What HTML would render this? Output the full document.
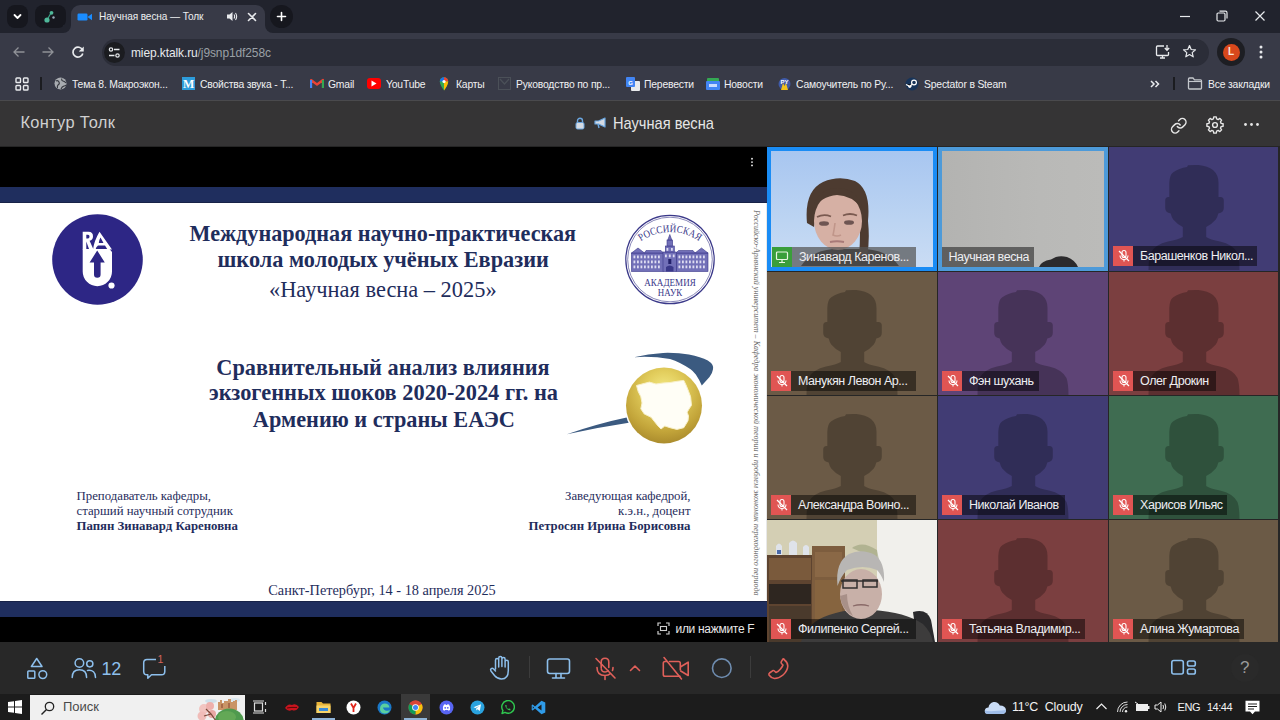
<!DOCTYPE html>
<html><head><meta charset="utf-8">
<style>
*{margin:0;padding:0;box-sizing:border-box}
html,body{width:1280px;height:720px;overflow:hidden;background:#000;font-family:"Liberation Sans",sans-serif}
.a{position:absolute}
#tabs{left:0;top:0;width:1280px;height:33px;background:#21232d}
#tool{left:0;top:33px;width:1280px;height:37px;background:#383a47}
#bm{left:0;top:70px;width:1280px;height:30px;background:#383a47}
#hdr{left:0;top:100px;width:1280px;height:46px;background:#353435;border-top:1px solid #4a4a4d}
#main{left:0;top:147px;width:767px;height:495px;background:#000}
#grid{left:767px;top:147px;width:513px;height:495px;background:#262626}
#ctl{left:0;top:642px;width:1280px;height:52px;background:#282828}
#task{left:0;top:694px;width:1280px;height:26px;background:#1c1c1c}
.t{white-space:nowrap}
.tile{overflow:hidden}
.lbl{height:20px;background:rgba(0,0,0,0.48);color:#eeeef2;font-size:12.5px;line-height:20px;padding-left:7px;white-space:nowrap;overflow:hidden;letter-spacing:-0.45px}
.sb{font-family:"Liberation Serif",serif;font-weight:bold;color:#1f2d5c;line-height:1}
.sr{font-family:"Liberation Serif",serif;color:#1f2d5c;line-height:1}
.sr2{font-family:"Liberation Serif",serif;color:#1f2d5c;font-size:12.8px;line-height:1}
.bmt{top:8px;font-size:11.5px;color:#f0f0f2;letter-spacing:-0.2px;transform:scaleX(0.9);transform-origin:0 0}
</style></head><body>

<div id="tabs" class="a">
  <div class="a" style="left:7px;top:5px;width:21px;height:23px;border-radius:8px;background:#16171e"></div>
  <svg class="a" style="left:11px;top:10px" width="13" height="13" viewBox="0 0 13 13"><path d="M3.5 5 L6.5 8 L9.5 5" stroke="#fff" stroke-width="1.8" fill="none" stroke-linecap="round" stroke-linejoin="round"/></svg>
  <div class="a" style="left:35px;top:5px;width:31px;height:23px;border-radius:8px;background:#16171e"></div>
  <svg class="a" style="left:42px;top:9px" width="16" height="16" viewBox="0 0 16 16"><line x1="5" y1="11" x2="9" y2="4" stroke="#3aa889" stroke-width="1.2"/><circle cx="5" cy="11" r="2.6" fill="#4fb89a"/><circle cx="9.5" cy="3.8" r="1.9" fill="#4fb89a"/><circle cx="11.5" cy="8.5" r="1.2" fill="#9ab"/></svg>
  <!-- active tab -->
  <div class="a" style="left:71px;top:5px;width:194px;height:28px;background:#383a47;border-radius:9px 9px 0 0"></div>
  <div class="a" style="left:63px;top:25px;width:8px;height:8px;background:#383a47"></div>
  <div class="a" style="left:63px;top:25px;width:8px;height:8px;background:#21232d;border-radius:0 0 8px 0"></div>
  <div class="a" style="left:265px;top:25px;width:8px;height:8px;background:#383a47"></div>
  <div class="a" style="left:265px;top:25px;width:8px;height:8px;background:#21232d;border-radius:0 0 0 8px"></div>
  <svg class="a" style="left:77px;top:12px" width="16" height="10" viewBox="0 0 16 10"><rect x="0.5" y="1.5" width="10" height="7" rx="1.2" fill="#1a8cff"/><path d="M10.5 5 L15 1.8 L15 8.2 Z" fill="#1a8cff"/></svg>
  <div class="a t" style="left:98.5px;top:10px;font-size:11.2px;color:#eceef0;letter-spacing:-0.1px;transform:scaleX(0.9);transform-origin:0 0">Научная весна — Толк</div>
  <svg class="a" style="left:226px;top:11px" width="12" height="11" viewBox="0 0 12 11"><path d="M1 3.5 H3.5 L6.5 1 V10 L3.5 7.5 H1 Z" fill="#e8eaed"/><path d="M8 3.5 Q9.3 5.5 8 7.5 M9.5 2 Q11.8 5.5 9.5 9" stroke="#e8eaed" stroke-width="1.1" fill="none"/></svg>
  <svg class="a" style="left:247px;top:12px" width="10" height="10" viewBox="0 0 10 10"><path d="M1.5 1.5 L8.5 8.5 M8.5 1.5 L1.5 8.5" stroke="#e8eaed" stroke-width="1.6" stroke-linecap="round"/></svg>
  <div class="a" style="left:270px;top:5px;width:23px;height:23px;border-radius:50%;background:#16171e"></div>
  <svg class="a" style="left:275px;top:10px" width="13" height="13" viewBox="0 0 13 13"><path d="M6.5 2.5 V10.5 M2.5 6.5 H10.5" stroke="#fff" stroke-width="1.6" stroke-linecap="round"/></svg>
  <svg class="a" style="left:1178px;top:9px" width="14" height="14" viewBox="0 0 14 14"><path d="M2 7.5 H12" stroke="#e8eaed" stroke-width="1.2"/></svg>
  <svg class="a" style="left:1215px;top:9px" width="14" height="14" viewBox="0 0 14 14"><rect x="2" y="4" width="8" height="8" rx="1.2" stroke="#e8eaed" stroke-width="1.2" fill="none"/><path d="M4.5 2.2 H10.5 Q12 2.2 12 3.7 V9.5" stroke="#e8eaed" stroke-width="1.2" fill="none"/></svg>
  <svg class="a" style="left:1253px;top:9px" width="14" height="14" viewBox="0 0 14 14"><path d="M2.5 2.5 L11.5 11.5 M11.5 2.5 L2.5 11.5" stroke="#e8eaed" stroke-width="1.2"/></svg>
</div>
<div id="tool" class="a">
  <svg class="a" style="left:12px;top:12px" width="14" height="14" viewBox="0 0 14 14"><path d="M12.5 7 H2 M6.5 2.5 L2 7 L6.5 11.5" stroke="#8f9197" stroke-width="1.3" fill="none"/></svg>
  <svg class="a" style="left:41px;top:12px" width="14" height="14" viewBox="0 0 14 14"><path d="M1.5 7 H12 M7.5 2.5 L12 7 L7.5 11.5" stroke="#8f9197" stroke-width="1.3" fill="none"/></svg>
  <svg class="a" style="left:71px;top:12px" width="14" height="14" viewBox="0 0 14 14"><path d="M11.6 5.2 A5 5 0 1 0 11.8 8.5" stroke="#e8eaed" stroke-width="1.7" fill="none"/><path d="M12.5 1.8 V6.3 H8" fill="#e8eaed" stroke="#e8eaed" stroke-width="0.5"/></svg>
  <div class="a" style="left:102px;top:6px;width:1107px;height:27px;border-radius:14px;background:#2b2d38"></div>
  <div class="a" style="left:104px;top:9px;width:21px;height:21px;border-radius:50%;background:#1b1c20"></div>
  <svg class="a" style="left:107px;top:12px" width="15" height="15" viewBox="0 0 15 15"><circle cx="4" cy="4.5" r="1.7" stroke="#e8eaed" stroke-width="1.2" fill="none"/><path d="M7 4.5 H12.5 M2 10.5 H7.5" stroke="#e8eaed" stroke-width="1.3"/><circle cx="10.5" cy="10.5" r="1.7" stroke="#e8eaed" stroke-width="1.2" fill="none"/></svg>
  <div class="a t" style="left:131px;top:12px;font-size:13px;color:#e8eaed;letter-spacing:-0.1px;transform:scaleX(0.92);transform-origin:0 0">miep.ktalk.ru<span style="color:#9aa0a6">/j9snp1df258c</span></div>
  <svg class="a" style="left:1155px;top:11px" width="16" height="16" viewBox="0 0 16 16"><path d="M9 2 H2.5 Q1.5 2 1.5 3 V10.5 Q1.5 11.5 2.5 11.5 H12.5 Q13.5 11.5 13.5 10.5 V8" stroke="#e8eaed" stroke-width="1.3" fill="none"/><path d="M5 14 H10 M7.5 11.5 V14" stroke="#e8eaed" stroke-width="1.3"/><path d="M12 1 V6 M9.8 4 L12 6.3 L14.2 4" stroke="#e8eaed" stroke-width="1.3" fill="none"/></svg>
  <svg class="a" style="left:1182px;top:11px" width="15" height="15" viewBox="0 0 15 15"><path d="M7.5 1.5 L9.2 5.5 L13.5 5.8 L10.2 8.6 L11.2 12.8 L7.5 10.5 L3.8 12.8 L4.8 8.6 L1.5 5.8 L5.8 5.5 Z" stroke="#e8eaed" stroke-width="1.2" fill="none" stroke-linejoin="round"/></svg>
  <div class="a" style="left:1217px;top:5px;width:28px;height:28px;border-radius:50%;background:#1d1e23"></div>
  <div class="a" style="left:1223px;top:11px;width:17px;height:17px;border-radius:50%;background:#d8481c"></div>
  <div class="a t" style="left:1228px;top:13px;font-size:10px;color:#fce8dc;font-weight:bold">L</div>
  <svg class="a" style="left:1258px;top:11px" width="6" height="16" viewBox="0 0 6 16"><circle cx="3" cy="3" r="1.5" fill="#e8eaed"/><circle cx="3" cy="8" r="1.5" fill="#e8eaed"/><circle cx="3" cy="13" r="1.5" fill="#e8eaed"/></svg>
</div>
<div id="bm" class="a">
  <svg class="a" style="left:15px;top:7px" width="14" height="14" viewBox="0 0 14 14"><g stroke="#e8eaed" stroke-width="1.4" fill="none"><rect x="1" y="1" width="4.5" height="4.5" rx="0.8"/><rect x="8.5" y="1" width="4.5" height="4.5" rx="0.8"/><rect x="1" y="8.5" width="4.5" height="4.5" rx="0.8"/><rect x="8.5" y="8.5" width="4.5" height="4.5" rx="0.8"/></g></svg>
  <div class="a" style="left:40px;top:7px;width:2px;height:13px;background:#1b1c20"></div>
  <svg class="a" style="left:54px;top:7px" width="13" height="13" viewBox="0 0 13 13"><circle cx="6.5" cy="6.5" r="6" fill="#a8abb0"/><path d="M2 4 Q4 3 5 5 Q6 7 4 8 Q3 9 3.5 11 M8 1.5 Q7 3.5 9 4 Q11 4.5 12 6 M7 12 Q8 9.5 10 9 Q11.5 9 12 8" stroke="#35373e" stroke-width="1.1" fill="none"/></svg>
  <div class="a t bmt" style="left:72px">Тема 8. Макроэкон...</div>
  <div class="a" style="left:182px;top:7px;width:13px;height:13px;background:#2d9cdb"></div>
  <div class="a t" style="left:183px;top:7px;font-size:12px;font-family:'Liberation Serif',serif;color:#fff;font-weight:bold">M</div>
  <div class="a t bmt" style="left:200px">Свойства звука - Т...</div>
  <svg class="a" style="left:310px;top:8px" width="14" height="11" viewBox="0 0 14 11"><path d="M1 10 V2 L7 6.5 L13 2 V10" stroke="#ea4335" stroke-width="2.2" fill="none" stroke-linejoin="round"/><path d="M1 10 V2" stroke="#4285f4" stroke-width="2.2"/><path d="M13 10 V2" stroke="#34a853" stroke-width="2.2"/></svg>
  <div class="a t bmt" style="left:328px">Gmail</div>
  <div class="a" style="left:367px;top:8px;width:14px;height:11px;border-radius:3px;background:#f00"></div>
  <svg class="a" style="left:371px;top:10px" width="6" height="7" viewBox="0 0 6 7"><path d="M0.5 0.5 L5.5 3.5 L0.5 6.5 Z" fill="#fff"/></svg>
  <div class="a t bmt" style="left:386px">YouTube</div>
  <svg class="a" style="left:439px;top:6px" width="10" height="15" viewBox="0 0 10 15"><path d="M5 14.5 Q1 9 0.8 5.5 A4.2 4.2 0 0 1 9.2 5.5 Q9 9 5 14.5 Z" fill="#34a853"/><path d="M0.8 5.5 A4.2 4.2 0 0 1 5 1.3 V5.5 Z" fill="#1a73e8"/><path d="M5 1.3 A4.2 4.2 0 0 1 9.2 5.5 H5Z" fill="#ea4335"/><path d="M9.2 5.5 Q9 9 5 14.5 L5 5.5Z" fill="#fbbc04"/><circle cx="5" cy="5.5" r="1.6" fill="#fff"/></svg>
  <div class="a t bmt" style="left:456px">Карты</div>
  <div class="a" style="left:498px;top:7px;width:13px;height:13px;border:1.5px solid #4b5058"></div>
  <svg class="a" style="left:499px;top:8px" width="11" height="11" viewBox="0 0 11 11"><path d="M1 1 L5.5 6 L10 1" stroke="#4b5058" stroke-width="1.2" fill="none"/></svg>
  <div class="a t bmt" style="left:516px">Руководство по пр...</div>
  <svg class="a" style="left:626px;top:7px" width="14" height="14" viewBox="0 0 14 14"><rect x="5" y="4" width="9" height="10" rx="1" fill="#e8eaed"/><rect x="0" y="0" width="9" height="10" rx="1" fill="#4285f4"/><text x="4.5" y="7.5" font-size="6" fill="#fff" text-anchor="middle" font-family="Liberation Sans" font-weight="bold">G</text></svg>
  <div class="a t bmt" style="left:644px">Перевести</div>
  <svg class="a" style="left:706px;top:7px" width="14" height="14" viewBox="0 0 14 14"><rect x="1" y="1" width="12" height="6" rx="1" fill="#34a853"/><rect x="0" y="4" width="14" height="9" rx="1" fill="#4285f4"/><rect x="3" y="7" width="8" height="3" fill="#c9dcff"/></svg>
  <div class="a t bmt" style="left:724px">Новости</div>
  <svg class="a" style="left:778px;top:7px" width="13" height="14" viewBox="0 0 13 14"><circle cx="6.5" cy="7" r="6" fill="#3f5aa8"/><path d="M3 13 L5 6 L6.5 9 L8 6 L10 13 Z" fill="#f2c21b"/><text x="6.5" y="7" font-size="6" fill="#fff" text-anchor="middle" font-family="Liberation Sans" font-weight="bold">PY</text></svg>
  <div class="a t bmt" style="left:796px">Самоучитель по Ру...</div>
  <svg class="a" style="left:905px;top:7px" width="14" height="14" viewBox="0 0 14 14"><circle cx="7" cy="7" r="6.5" fill="#17345a"/><circle cx="9" cy="5.5" r="2.4" stroke="#fff" stroke-width="1.2" fill="none"/><circle cx="4.8" cy="9.3" r="1.6" fill="#fff"/><path d="M1 7.5 L4.8 9.3 L7.5 7" stroke="#fff" stroke-width="1.3"/></svg>
  <div class="a t bmt" style="left:924px">Spectator в Steam</div>
  <svg class="a" style="left:1150px;top:10px" width="10" height="8" viewBox="0 0 10 8"><path d="M1 1 L4 4 L1 7 M5.5 1 L8.5 4 L5.5 7" stroke="#e8eaed" stroke-width="1.5" fill="none"/></svg>
  <div class="a" style="left:1173px;top:7px;width:2px;height:13px;background:#1b1c20"></div>
  <svg class="a" style="left:1187px;top:7px" width="16" height="13" viewBox="0 0 16 13"><path d="M1.5 2 Q1.5 1 2.5 1 H6 L7.5 2.8 H13.5 Q14.5 2.8 14.5 3.8 V11 Q14.5 12 13.5 12 H2.5 Q1.5 12 1.5 11 Z" stroke="#c4c7cc" stroke-width="1.3" fill="none"/><path d="M1.5 4.5 H14.5" stroke="#c4c7cc" stroke-width="1.1"/></svg>
  <div class="a t bmt" style="left:1208px">Все закладки</div>
</div>
<div id="hdr" class="a">
  <div class="a t" style="left:20.5px;top:11.5px;font-size:16.4px;color:#d0d0d0;letter-spacing:0.3px">Контур Толк</div>
  <svg class="a" style="left:575px;top:116px;top:16px" width="10" height="13" viewBox="0 0 10 13"><path d="M2.5 5.5 V3.8 A2.5 2.5 0 0 1 7.5 3.8 V5.5" stroke="#6aa6e0" stroke-width="1.4" fill="none"/><rect x="1" y="5.5" width="8" height="6.5" rx="1.5" fill="#d5dbe3" stroke="#6aa6e0" stroke-width="1"/></svg>
  <svg class="a" style="left:594px;top:16px" width="13" height="12" viewBox="0 0 13 12"><path d="M1 4 H4.5 L11 1 V10 L4.5 7 H1 Z" fill="#d5dbe3" stroke="#6aa6e0" stroke-width="1.2" stroke-linejoin="round"/><path d="M4 7 L5 11" stroke="#6aa6e0" stroke-width="1.4"/></svg>
  <div class="a t" style="left:613px;top:12.5px;font-size:17px;color:#e6e6e6;transform:scaleX(0.86);transform-origin:0 0">Научная весна</div>
  <svg class="a" style="left:1169.5px;top:15.5px" width="17.5" height="17.5" viewBox="0 0 24 24"><path d="M10 13a5 5 0 0 0 7.54.54l3-3a5 5 0 0 0-7.07-7.07l-1.72 1.71" stroke="#e6e6e6" stroke-width="2" fill="none" stroke-linecap="round" stroke-linejoin="round"/><path d="M14 11a5 5 0 0 0-7.54-.54l-3 3a5 5 0 0 0 7.07 7.07l1.71-1.71" stroke="#e6e6e6" stroke-width="2" fill="none" stroke-linecap="round" stroke-linejoin="round"/></svg>
  <svg class="a" style="left:1205px;top:14px" width="20" height="20" viewBox="0 0 20 20"><path d="M8.38 3.91 L8.77 1.89 L11.23 1.89 L11.62 3.91 L13.16 4.55 L14.87 3.40 L16.60 5.13 L15.45 6.84 L16.09 8.38 L18.11 8.77 L18.11 11.23 L16.09 11.62 L15.45 13.16 L16.60 14.87 L14.87 16.60 L13.16 15.45 L11.62 16.09 L11.23 18.11 L8.77 18.11 L8.38 16.09 L6.84 15.45 L5.13 16.60 L3.40 14.87 L4.55 13.16 L3.91 11.62 L1.89 11.23 L1.89 8.77 L3.91 8.38 L4.55 6.84 L3.40 5.13 L5.13 3.40 L6.84 4.55 Z" stroke="#e6e6e6" stroke-width="1.4" fill="none" stroke-linejoin="round"/><circle cx="10" cy="10" r="2.4" stroke="#e6e6e6" stroke-width="1.4" fill="none"/></svg>
  <svg class="a" style="left:1243px;top:21px" width="18" height="5" viewBox="0 0 18 5"><circle cx="2.5" cy="2.5" r="1.4" fill="#e6e6e6"/><circle cx="8.5" cy="2.5" r="1.4" fill="#e6e6e6"/><circle cx="14.5" cy="2.5" r="1.4" fill="#e6e6e6"/></svg>
</div>
<div class="a" style="left:0;top:146px;width:1280px;height:1px;background:#252525"></div>
<div id="main" class="a">
  <svg class="a" style="left:749px;top:10px" width="6" height="12" viewBox="0 0 6 12"><circle cx="3" cy="1.8" r="0.95" fill="#e8e8e8"/><circle cx="3" cy="5.1" r="0.95" fill="#e8e8e8"/><circle cx="3" cy="8.4" r="0.95" fill="#e8e8e8"/></svg>
  <div class="a" style="left:0;top:40px;width:767px;height:16px;background:#1f2e5e;border-bottom:1px solid #172247"></div>
  <div class="a" id="slide" style="left:0;top:56px;width:767px;height:397.5px;background:#fff;overflow:hidden">
    <svg class="a" style="left:52px;top:11px" width="91" height="91" viewBox="0 0 91 91">
      <circle cx="45.5" cy="45.5" r="45.3" fill="#2d2685"/>
      <path d="M30.7 35 H57.5 L60 38 V57.5 A14.65 14.65 0 0 1 30.7 57.5 Z" fill="#fff"/>
      <path d="M30.7 17.7 H36.5 Q41 17.7 41 22.2 Q41 26 37.6 26.8 L41.5 35.5 H37.2 L34.3 27.5 V35.5 H30.7 Z M34.3 20.8 V24.5 H36 Q37.5 24.5 37.5 22.6 Q37.5 20.8 36 20.8 Z" fill="#fff" fill-rule="evenodd"/>
      <path d="M47.5 17.7 L60 35.5 H55.5 L53 31.5 H46 Q44 33 43.5 35.5 H41 Q42 27 47.5 17.7 Z M48.5 23.5 Q47 26 46.8 29 H51.5 Z" fill="#fff" fill-rule="evenodd"/>
      <path d="M45.2 36.5 L52.8 48.5 H48.6 V60.5 A3.3 3.3 0 0 1 42 60.5 V48.5 H37.6 Z" fill="#2d2685"/>
      <circle cx="59.5" cy="71.5" r="3.1" fill="#fff"/>
    </svg>

    <svg class="a" style="left:620px;top:7px" width="100" height="100" viewBox="0 0 100 100">
      <circle cx="50" cy="49.5" r="44.2" stroke="#3a3889" stroke-width="1.2" fill="none"/>
      <circle cx="50" cy="49.5" r="42.3" stroke="#3a3889" stroke-width="0.6" fill="none"/>
      <path id="arcp" d="M14 37 A50.9 50.9 0 0 1 86 37" fill="none"/>
      <text font-family="Liberation Serif" font-size="10.5" fill="#3a3889"><textPath href="#arcp" startOffset="50%" text-anchor="middle" textLength="62" lengthAdjust="spacingAndGlyphs">РОССИЙСКАЯ</textPath></text>
      <g fill="#7270b8" stroke="#3a3889" stroke-width="0.6">
        <rect x="11.5" y="43" width="32" height="18.5"/>
        <rect x="56" y="43" width="32" height="18.5"/>
        <path d="M11.5 43 L18 38 L24.5 43 Z M75 43 L81.5 38 L88 43Z M24.5 43 L26 40.5 H41 L43.5 43Z M56 43 L58.5 40.5 H73 L75 43Z"/>
        <rect x="43" y="42" width="13.6" height="19.5"/>
        <rect x="45.3" y="36" width="9" height="6"/>
        <rect x="47" y="30" width="5.6" height="6"/>
        <path d="M47.8 30 L49.8 24.5 L51.8 30 Z"/>
      </g>
      <g fill="#dedcf2">
        <rect x="13.5" y="45.5" width="1.8" height="2.8"/><rect x="13.5" y="50.5" width="1.8" height="2.8"/><rect x="13.5" y="55.5" width="1.8" height="2.8"/><rect x="17" y="45.5" width="1.8" height="2.8"/><rect x="17" y="50.5" width="1.8" height="2.8"/><rect x="17" y="55.5" width="1.8" height="2.8"/><rect x="20.5" y="45.5" width="1.8" height="2.8"/><rect x="20.5" y="50.5" width="1.8" height="2.8"/><rect x="20.5" y="55.5" width="1.8" height="2.8"/><rect x="24" y="45.5" width="1.8" height="2.8"/><rect x="24" y="50.5" width="1.8" height="2.8"/><rect x="24" y="55.5" width="1.8" height="2.8"/><rect x="27.5" y="45.5" width="1.8" height="2.8"/><rect x="27.5" y="50.5" width="1.8" height="2.8"/><rect x="27.5" y="55.5" width="1.8" height="2.8"/><rect x="31" y="45.5" width="1.8" height="2.8"/><rect x="31" y="50.5" width="1.8" height="2.8"/><rect x="31" y="55.5" width="1.8" height="2.8"/><rect x="34.5" y="45.5" width="1.8" height="2.8"/><rect x="34.5" y="50.5" width="1.8" height="2.8"/><rect x="34.5" y="55.5" width="1.8" height="2.8"/><rect x="38" y="45.5" width="1.8" height="2.8"/><rect x="38" y="50.5" width="1.8" height="2.8"/><rect x="38" y="55.5" width="1.8" height="2.8"/><rect x="58.5" y="45.5" width="1.8" height="2.8"/><rect x="58.5" y="50.5" width="1.8" height="2.8"/><rect x="58.5" y="55.5" width="1.8" height="2.8"/><rect x="62" y="45.5" width="1.8" height="2.8"/><rect x="62" y="50.5" width="1.8" height="2.8"/><rect x="62" y="55.5" width="1.8" height="2.8"/><rect x="65.5" y="45.5" width="1.8" height="2.8"/><rect x="65.5" y="50.5" width="1.8" height="2.8"/><rect x="65.5" y="55.5" width="1.8" height="2.8"/><rect x="69" y="45.5" width="1.8" height="2.8"/><rect x="69" y="50.5" width="1.8" height="2.8"/><rect x="69" y="55.5" width="1.8" height="2.8"/><rect x="72.5" y="45.5" width="1.8" height="2.8"/><rect x="72.5" y="50.5" width="1.8" height="2.8"/><rect x="72.5" y="55.5" width="1.8" height="2.8"/><rect x="76" y="45.5" width="1.8" height="2.8"/><rect x="76" y="50.5" width="1.8" height="2.8"/><rect x="76" y="55.5" width="1.8" height="2.8"/><rect x="79.5" y="45.5" width="1.8" height="2.8"/><rect x="79.5" y="50.5" width="1.8" height="2.8"/><rect x="79.5" y="55.5" width="1.8" height="2.8"/><rect x="83" y="45.5" width="1.8" height="2.8"/><rect x="83" y="50.5" width="1.8" height="2.8"/><rect x="83" y="55.5" width="1.8" height="2.8"/>
        <rect x="45" y="44.5" width="1.8" height="2.8"/><rect x="48.9" y="44.5" width="1.8" height="2.8"/><rect x="52.8" y="44.5" width="1.8" height="2.8"/><rect x="46.5" y="38" width="1.8" height="2.8"/><rect x="51" y="38" width="1.8" height="2.8"/>
      </g>
      <rect x="48.3" y="49" width="3" height="5" fill="#23216a"/>
      <path d="M46 61.5 V57 Q49.8 54 53.5 57 V61.5Z" fill="#3a3889"/>
      <text x="50" y="75.5" font-family="Liberation Serif" font-size="10.4" fill="#3a3889" text-anchor="middle" textLength="51.4" lengthAdjust="spacingAndGlyphs">АКАДЕМИЯ</text>
      <text x="50" y="85.5" font-family="Liberation Serif" font-size="10.4" fill="#3a3889" text-anchor="middle" textLength="24.3" lengthAdjust="spacingAndGlyphs">НАУК</text>
    </svg>
    <svg class="a" style="left:560px;top:140px" width="160" height="110" viewBox="0 0 160 110">
      <defs>
        <radialGradient id="gold" cx="50%" cy="30%" r="72%">
          <stop offset="0" stop-color="#f4ea86"/>
          <stop offset="0.35" stop-color="#e2cd5c"/>
          <stop offset="0.75" stop-color="#c3a53a"/>
          <stop offset="1" stop-color="#a8892c"/>
        </radialGradient>
      </defs>
      <path d="M74 14.2 Q88 10.5 103.1 9.9 Q118 9.5 128.9 11.6 Q141 14 147.8 17.6 Q154 21.5 153 26.2 Q152.5 30 149.5 34 L141.8 42.5 Q139 36 135.8 31.4 Q133 28 130.6 26.2 Q120 19 110 15.9 Q92 13 74 14.2 Z" fill="#3b5a80"/>
      <path d="M6.9 91.2 Q38 80.5 68.8 74 L68.8 79.8 Q38 84.5 6.9 91.2 Z" fill="#3b5a80"/>
      <circle cx="104" cy="62.5" r="39.5" fill="#fff"/>
      <circle cx="104" cy="62.5" r="38" fill="url(#gold)"/>
      <path d="M76.5 42.5 L82 41 L89.4 39.1 L96 41 L103.1 40 L110 39.5 L116.9 38.3 L123.8 37.4 L126 42 L128 46.8 L130.6 53.7 L131.5 62.3 L129 66 L127.2 69.2 L128.5 73 L128 77.8 L123.8 84.7 L116.9 86.4 L110 84.7 L104.8 83 L101 86 L98 83 L94 78 L91.1 74.3 L84.2 70.9 L80.8 65.8 L82 60 L80.8 53.7 L78.2 48.6 Z" fill="#fffef6" stroke="#f8f0c8" stroke-width="1"/>
    </svg>
    <div class="a t sb" style="left:189.5px;top:20px;font-size:22.2px">Международная научно-практическая</div>
    <div class="a t sb" style="left:217.5px;top:46px;font-size:22.3px">школа молодых учёных Евразии</div>
    <div class="a t sr" style="left:269px;top:76px;font-size:22.4px">«Научная весна – 2025»</div>

    <div class="a t sb" style="left:216.3px;top:153.5px;font-size:22.3px">Сравнительный анализ влияния</div>
    <div class="a t sb" style="left:209px;top:179.3px;font-size:22.4px">экзогенных шоков 2020-2024 гг. на</div>
    <div class="a t sb" style="left:252.8px;top:206px;font-size:22.3px">Армению и страны ЕАЭС</div>

    <div class="a t sr2" style="left:76.5px;top:286.7px">Преподаватель кафедры,</div>
    <div class="a t sr2" style="left:76.5px;top:301.9px">старший научный сотрудник</div>
    <div class="a t sr2" style="left:76.5px;top:316.8px;font-weight:bold">Папян Зинавард Кареновна</div>
    <div class="a t sr2" style="right:76.5px;top:286.7px;text-align:right">Заведующая кафедрой,</div>
    <div class="a t sr2" style="right:76.5px;top:301.9px;text-align:right">к.э.н., доцент</div>
    <div class="a t sr2" style="right:76.5px;top:316.8px;text-align:right;font-weight:bold">Петросян Ирина Борисовна</div>
    <div class="a t sr" style="left:268.3px;top:380px;font-size:14.3px">Санкт-Петербург, 14 - 18 апреля 2025</div>

    <div class="a t" style="left:751px;top:7px;height:12px;transform-origin:0 0;transform:translate(12px,0) rotate(90deg) scaleX(0.9);font-family:'Liberation Serif',serif;font-style:italic;font-size:9px;color:#6a6a6a;line-height:12px">Российско-Армянский университет – Кафедра экономической теории и проблем экономик переходного периода</div>
    <div class="a" style="left:766px;top:0;width:1px;height:397px;background:#e8e8e8"></div>
  </div>
  <div class="a" style="left:0;top:453.5px;width:767px;height:16px;background:#1f2e5e;border-top:1px solid #172247"></div>
  <svg class="a" style="left:657px;top:475px" width="13" height="13" viewBox="0 0 13 13"><path d="M1 4 V1 H4 M9 1 H12 V4 M12 9 V12 H9 M4 12 H1 V9" stroke="#cfcfcf" stroke-width="1.2" fill="none"/><rect x="3.5" y="4.5" width="6" height="4" stroke="#cfcfcf" stroke-width="1.1" fill="none"/></svg>
  <div class="a t" style="left:675.5px;top:474.5px;font-size:12px;color:#e8e8e8;letter-spacing:-0.3px">или нажмите F</div>
</div>
<div id="grid" class="a">
<div class="a tile" style="left:0px;top:0px;width:170px;height:124px;background:#1a8cf5"><div class="a" style="left:4px;top:3.8px;width:162px;height:116px;overflow:hidden;background:linear-gradient(180deg,#a8c6f0 0%,#bcd4f2 60%,#cadcf4 100%)"><svg class="a" style="left:0;top:0" width="161" height="115" viewBox="0 0 161 115"><path d="M30 115 Q40 100 62 98 L95 98 Q118 100 128 115 Z" fill="#2a2424"/><path d="M36 72 Q33 40 52 31 Q68 24 84 30 Q100 38 97 70 Q99 90 96 106 L88 106 Q90 80 88 60 L45 60 Q44 72 43 76 Z" fill="#4d3b30"/><ellipse cx="67" cy="70" rx="24" ry="29" fill="#d6b0a4"/><path d="M41 60 Q45 38 66 37 Q86 37 92 58 Q80 44 66 44 Q50 45 41 60 Z" fill="#4d3b30"/><path d="M46 66 Q53 62.5 60 65.5 M72 64.5 Q79 61.5 86 64.5" stroke="#7a5a50" stroke-width="1.8" fill="none"/><ellipse cx="53" cy="72.5" rx="5" ry="2.3" fill="#6e5552"/><ellipse cx="78" cy="71.5" rx="5" ry="2.3" fill="#6e5552"/><path d="M64 72 Q63 80 62 84 Q66 86 70 84" stroke="#c0968a" stroke-width="1.6" fill="none"/><path d="M59 91 Q66 89.5 73 91" stroke="#a87a78" stroke-width="2" fill="none"/></svg></div><div class="a" style="left:4.5px;top:100px;width:20.5px;height:19.5px;background:#3a9e3a"><svg class="a" style="left:3px;top:3px" width="14" height="14" viewBox="0 0 14 14"><rect x="1.5" y="2" width="11" height="7.5" rx="1" stroke="#e8f5e0" stroke-width="1.2" fill="none"/><path d="M7 9.5 V12 M4 12.5 H10" stroke="#e8f5e0" stroke-width="1.2"/></svg></div><div class="a lbl" style="left:25px;top:100px;width:123.5px;height:19.5px;background:rgba(85,85,85,0.72)">Зинавард Каренов...</div></div>
<div class="a tile" style="left:171px;top:0px;width:169.5px;height:124px;background:#4d9ad9"><div class="a" style="left:4px;top:4px;width:162px;height:116px;overflow:hidden;background:linear-gradient(90deg,#b3b3b1,#b9b9b7 60%,#bbbbb9)"><svg class="a" style="left:0;top:0" width="162" height="116" viewBox="0 0 162 116"><path d="M97 116 Q99 110 109 108.5 Q116 103.5 125 106 Q133 109 136 116 Z" fill="#2b2a2c"/></svg></div><div class="a lbl" style="left:4px;top:100px;width:92px;height:19.5px;background:rgba(72,72,72,0.78);padding-left:6.5px">Научная весна</div></div>
<div class="a tile" style="left:342px;top:0px;width:169px;height:124px;background:#413c74"><svg class="a" style="left:0;top:0" width="170" height="123" viewBox="0 0 170 123"><path d="M60.3 50 V36 Q60.5 28 64 25.5 Q70 21 78 20 L79 18.3 Q84 17.8 89.5 18 Q99 19 104 23 Q109.6 28 109.5 36 V50 H111.5 Q114.8 50 114.8 53.5 V61 Q114.8 65.5 109.3 66.5 Q108.5 70 106.8 72.5 Q102.5 77.5 97.2 80 V90 Q101 92.5 111 94.5 Q124 97.5 128.5 106 Q130.5 112 130.5 123 H39.5 Q39.5 112 41.5 106 Q46 97.5 59 94.5 Q69 92.5 73.8 90 V80 Q68.5 77.5 64.2 72.5 Q62.5 70 61.7 66.5 Q56.2 65.5 56.2 61 V53.5 Q56.2 50 59.5 50 Z" fill="rgba(0,0,0,0.25)"/></svg><div class="a" style="left:4px;top:98.5px;width:20px;height:20px;background:#e05553"><svg class="a" style="left:4px;top:3px" width="14" height="14" viewBox="0 0 14 14"><path d="M5 6.5 V3.5 A2 2 0 0 1 9 3.5 V6.5 A2 2 0 0 1 5 6.5 Z" stroke="#fff" stroke-width="1.1" fill="none"/><path d="M3 6.5 A4 4 0 0 0 11 6.5 M7 10.5 V12.5" stroke="#fff" stroke-width="1.1" fill="none"/><path d="M2 2 L12 12" stroke="#fff" stroke-width="1.2"/></svg></div><div class="a lbl" style="left:24px;top:98.5px;width:124px">Барашенков Никол...</div></div>
<div class="a tile" style="left:0px;top:125px;width:170px;height:123px;background:#6b5a46"><svg class="a" style="left:0;top:0" width="170" height="123" viewBox="0 0 170 123"><path d="M60.3 50 V36 Q60.5 28 64 25.5 Q70 21 78 20 L79 18.3 Q84 17.8 89.5 18 Q99 19 104 23 Q109.6 28 109.5 36 V50 H111.5 Q114.8 50 114.8 53.5 V61 Q114.8 65.5 109.3 66.5 Q108.5 70 106.8 72.5 Q102.5 77.5 97.2 80 V90 Q101 92.5 111 94.5 Q124 97.5 128.5 106 Q130.5 112 130.5 123 H39.5 Q39.5 112 41.5 106 Q46 97.5 59 94.5 Q69 92.5 73.8 90 V80 Q68.5 77.5 64.2 72.5 Q62.5 70 61.7 66.5 Q56.2 65.5 56.2 61 V53.5 Q56.2 50 59.5 50 Z" fill="rgba(0,0,0,0.25)"/></svg><div class="a" style="left:4px;top:98.5px;width:20px;height:20px;background:#e05553"><svg class="a" style="left:4px;top:3px" width="14" height="14" viewBox="0 0 14 14"><path d="M5 6.5 V3.5 A2 2 0 0 1 9 3.5 V6.5 A2 2 0 0 1 5 6.5 Z" stroke="#fff" stroke-width="1.1" fill="none"/><path d="M3 6.5 A4 4 0 0 0 11 6.5 M7 10.5 V12.5" stroke="#fff" stroke-width="1.1" fill="none"/><path d="M2 2 L12 12" stroke="#fff" stroke-width="1.2"/></svg></div><div class="a lbl" style="left:24px;top:98.5px;width:124.6px">Манукян Левон Ар...</div></div>
<div class="a tile" style="left:171px;top:125px;width:169.5px;height:123px;background:#5e4476"><svg class="a" style="left:0;top:0" width="170" height="123" viewBox="0 0 170 123"><path d="M60.3 50 V36 Q60.5 28 64 25.5 Q70 21 78 20 L79 18.3 Q84 17.8 89.5 18 Q99 19 104 23 Q109.6 28 109.5 36 V50 H111.5 Q114.8 50 114.8 53.5 V61 Q114.8 65.5 109.3 66.5 Q108.5 70 106.8 72.5 Q102.5 77.5 97.2 80 V90 Q101 92.5 111 94.5 Q124 97.5 128.5 106 Q130.5 112 130.5 123 H39.5 Q39.5 112 41.5 106 Q46 97.5 59 94.5 Q69 92.5 73.8 90 V80 Q68.5 77.5 64.2 72.5 Q62.5 70 61.7 66.5 Q56.2 65.5 56.2 61 V53.5 Q56.2 50 59.5 50 Z" fill="rgba(0,0,0,0.25)"/></svg><div class="a" style="left:4px;top:98.5px;width:20px;height:20px;background:#e05553"><svg class="a" style="left:4px;top:3px" width="14" height="14" viewBox="0 0 14 14"><path d="M5 6.5 V3.5 A2 2 0 0 1 9 3.5 V6.5 A2 2 0 0 1 5 6.5 Z" stroke="#fff" stroke-width="1.1" fill="none"/><path d="M3 6.5 A4 4 0 0 0 11 6.5 M7 10.5 V12.5" stroke="#fff" stroke-width="1.1" fill="none"/><path d="M2 2 L12 12" stroke="#fff" stroke-width="1.2"/></svg></div><div class="a lbl" style="left:24px;top:98.5px;width:76.5px">Фэн шухань</div></div>
<div class="a tile" style="left:342px;top:125px;width:169px;height:123px;background:#7b3f40"><svg class="a" style="left:0;top:0" width="170" height="123" viewBox="0 0 170 123"><path d="M60.3 50 V36 Q60.5 28 64 25.5 Q70 21 78 20 L79 18.3 Q84 17.8 89.5 18 Q99 19 104 23 Q109.6 28 109.5 36 V50 H111.5 Q114.8 50 114.8 53.5 V61 Q114.8 65.5 109.3 66.5 Q108.5 70 106.8 72.5 Q102.5 77.5 97.2 80 V90 Q101 92.5 111 94.5 Q124 97.5 128.5 106 Q130.5 112 130.5 123 H39.5 Q39.5 112 41.5 106 Q46 97.5 59 94.5 Q69 92.5 73.8 90 V80 Q68.5 77.5 64.2 72.5 Q62.5 70 61.7 66.5 Q56.2 65.5 56.2 61 V53.5 Q56.2 50 59.5 50 Z" fill="rgba(0,0,0,0.25)"/></svg><div class="a" style="left:4px;top:98.5px;width:20px;height:20px;background:#e05553"><svg class="a" style="left:4px;top:3px" width="14" height="14" viewBox="0 0 14 14"><path d="M5 6.5 V3.5 A2 2 0 0 1 9 3.5 V6.5 A2 2 0 0 1 5 6.5 Z" stroke="#fff" stroke-width="1.1" fill="none"/><path d="M3 6.5 A4 4 0 0 0 11 6.5 M7 10.5 V12.5" stroke="#fff" stroke-width="1.1" fill="none"/><path d="M2 2 L12 12" stroke="#fff" stroke-width="1.2"/></svg></div><div class="a lbl" style="left:24px;top:98.5px;width:83px">Олег Дрокин</div></div>
<div class="a tile" style="left:0px;top:249px;width:170px;height:123px;background:#6b5a46"><svg class="a" style="left:0;top:0" width="170" height="123" viewBox="0 0 170 123"><path d="M60.3 50 V36 Q60.5 28 64 25.5 Q70 21 78 20 L79 18.3 Q84 17.8 89.5 18 Q99 19 104 23 Q109.6 28 109.5 36 V50 H111.5 Q114.8 50 114.8 53.5 V61 Q114.8 65.5 109.3 66.5 Q108.5 70 106.8 72.5 Q102.5 77.5 97.2 80 V90 Q101 92.5 111 94.5 Q124 97.5 128.5 106 Q130.5 112 130.5 123 H39.5 Q39.5 112 41.5 106 Q46 97.5 59 94.5 Q69 92.5 73.8 90 V80 Q68.5 77.5 64.2 72.5 Q62.5 70 61.7 66.5 Q56.2 65.5 56.2 61 V53.5 Q56.2 50 59.5 50 Z" fill="rgba(0,0,0,0.25)"/></svg><div class="a" style="left:4px;top:98.5px;width:20px;height:20px;background:#e05553"><svg class="a" style="left:4px;top:3px" width="14" height="14" viewBox="0 0 14 14"><path d="M5 6.5 V3.5 A2 2 0 0 1 9 3.5 V6.5 A2 2 0 0 1 5 6.5 Z" stroke="#fff" stroke-width="1.1" fill="none"/><path d="M3 6.5 A4 4 0 0 0 11 6.5 M7 10.5 V12.5" stroke="#fff" stroke-width="1.1" fill="none"/><path d="M2 2 L12 12" stroke="#fff" stroke-width="1.2"/></svg></div><div class="a lbl" style="left:24px;top:98.5px;width:124.6px">Александра Воино...</div></div>
<div class="a tile" style="left:171px;top:249px;width:169.5px;height:123px;background:#413c74"><svg class="a" style="left:0;top:0" width="170" height="123" viewBox="0 0 170 123"><path d="M60.3 50 V36 Q60.5 28 64 25.5 Q70 21 78 20 L79 18.3 Q84 17.8 89.5 18 Q99 19 104 23 Q109.6 28 109.5 36 V50 H111.5 Q114.8 50 114.8 53.5 V61 Q114.8 65.5 109.3 66.5 Q108.5 70 106.8 72.5 Q102.5 77.5 97.2 80 V90 Q101 92.5 111 94.5 Q124 97.5 128.5 106 Q130.5 112 130.5 123 H39.5 Q39.5 112 41.5 106 Q46 97.5 59 94.5 Q69 92.5 73.8 90 V80 Q68.5 77.5 64.2 72.5 Q62.5 70 61.7 66.5 Q56.2 65.5 56.2 61 V53.5 Q56.2 50 59.5 50 Z" fill="rgba(0,0,0,0.25)"/></svg><div class="a" style="left:4px;top:98.5px;width:20px;height:20px;background:#e05553"><svg class="a" style="left:4px;top:3px" width="14" height="14" viewBox="0 0 14 14"><path d="M5 6.5 V3.5 A2 2 0 0 1 9 3.5 V6.5 A2 2 0 0 1 5 6.5 Z" stroke="#fff" stroke-width="1.1" fill="none"/><path d="M3 6.5 A4 4 0 0 0 11 6.5 M7 10.5 V12.5" stroke="#fff" stroke-width="1.1" fill="none"/><path d="M2 2 L12 12" stroke="#fff" stroke-width="1.2"/></svg></div><div class="a lbl" style="left:24px;top:98.5px;width:102.5px">Николай Иванов</div></div>
<div class="a tile" style="left:342px;top:249px;width:169px;height:123px;background:#3f6c51"><svg class="a" style="left:0;top:0" width="170" height="123" viewBox="0 0 170 123"><path d="M60.3 50 V36 Q60.5 28 64 25.5 Q70 21 78 20 L79 18.3 Q84 17.8 89.5 18 Q99 19 104 23 Q109.6 28 109.5 36 V50 H111.5 Q114.8 50 114.8 53.5 V61 Q114.8 65.5 109.3 66.5 Q108.5 70 106.8 72.5 Q102.5 77.5 97.2 80 V90 Q101 92.5 111 94.5 Q124 97.5 128.5 106 Q130.5 112 130.5 123 H39.5 Q39.5 112 41.5 106 Q46 97.5 59 94.5 Q69 92.5 73.8 90 V80 Q68.5 77.5 64.2 72.5 Q62.5 70 61.7 66.5 Q56.2 65.5 56.2 61 V53.5 Q56.2 50 59.5 50 Z" fill="rgba(0,0,0,0.25)"/></svg><div class="a" style="left:4px;top:98.5px;width:20px;height:20px;background:#e05553"><svg class="a" style="left:4px;top:3px" width="14" height="14" viewBox="0 0 14 14"><path d="M5 6.5 V3.5 A2 2 0 0 1 9 3.5 V6.5 A2 2 0 0 1 5 6.5 Z" stroke="#fff" stroke-width="1.1" fill="none"/><path d="M3 6.5 A4 4 0 0 0 11 6.5 M7 10.5 V12.5" stroke="#fff" stroke-width="1.1" fill="none"/><path d="M2 2 L12 12" stroke="#fff" stroke-width="1.2"/></svg></div><div class="a lbl" style="left:24px;top:98.5px;width:94px">Харисов Ильяс</div></div>
<div class="a tile" style="left:0px;top:373px;width:170px;height:122px;overflow:hidden;background:#dcd8c2"><svg class="a" style="left:0;top:0" width="170" height="122" viewBox="0 0 170 122"><rect x="0" y="0" width="112" height="122" fill="#d4cfb4"/><rect x="110" y="0" width="60" height="122" fill="#f1f0ec"/><rect x="0" y="35" width="47" height="87" fill="#5e4430"/><rect x="2" y="38" width="42" height="22" fill="#7a5a3c"/><rect x="2" y="64" width="42" height="20" fill="#2e2620"/><rect x="2" y="86" width="42" height="36" fill="#4a3a2c"/><rect x="45" y="26" width="33" height="80" fill="#7d5d3e"/><rect x="48" y="32" width="27" height="25" fill="#8a6846"/><rect x="48" y="60" width="27" height="40" fill="#86643f"/><path d="M9 35 V26 Q12 21 15 26 V35 Z M22 35 V23 Q26 18 30 23 V35 Z M36 35 V27 Q39 23 42 27 V35Z" fill="#dfe3ea"/><path d="M10 30 H14 V34 H10Z" fill="#4a6aa8"/><path d="M85 28 Q95 20 110 30 L112 40 Z" fill="#9aa07a" opacity="0.6"/><path d="M146 92 Q160 88 164 100 L168 122 L150 122 Z" fill="#2a2a2c"/>
<path d="M34 122 Q40 102 62 95 Q74 91 84 90 L106 90 Q138 92 156 104 Q164 112 166 122 Z" fill="#3d3c3c"/>
<ellipse cx="94" cy="74" rx="21" ry="25" fill="#c8b0a8"/>
<path d="M73 76 Q75 90 86 96 Q80 86 80 74 Z" fill="#a89088"/>
<path d="M70.5 66 Q68 42 82 34 Q95 28 108 35 Q118 42 117 62 Q114 54 110 50 Q96 44 80 50 Q74 56 70.5 66 Z" fill="#b8b6b4"/>
<path d="M74 61 H111" stroke="#302e2e" stroke-width="1.6"/>
<path d="M76 60 H90 V68 H76 Z M96 60 H110 V67 H96 Z" stroke="#302e2e" stroke-width="1.5" fill="none"/>
<path d="M86 86 Q94 83.5 102 86" stroke="#8a6a68" stroke-width="1.3" fill="none"/>
</svg><div class="a" style="left:4px;top:98.5px;width:20px;height:20px;background:#e05553"><svg class="a" style="left:4px;top:3px" width="14" height="14" viewBox="0 0 14 14"><path d="M5 6.5 V3.5 A2 2 0 0 1 9 3.5 V6.5 A2 2 0 0 1 5 6.5 Z" stroke="#fff" stroke-width="1.1" fill="none"/><path d="M3 6.5 A4 4 0 0 0 11 6.5 M7 10.5 V12.5" stroke="#fff" stroke-width="1.1" fill="none"/><path d="M2 2 L12 12" stroke="#fff" stroke-width="1.2"/></svg></div><div class="a lbl" style="left:24px;top:98.5px;width:124.6px">Филипенко Сергей...</div></div>
<div class="a tile" style="left:171px;top:373px;width:169.5px;height:122px;background:#7b3f40"><svg class="a" style="left:0;top:0" width="170" height="123" viewBox="0 0 170 123"><path d="M60.3 50 V36 Q60.5 28 64 25.5 Q70 21 78 20 L79 18.3 Q84 17.8 89.5 18 Q99 19 104 23 Q109.6 28 109.5 36 V50 H111.5 Q114.8 50 114.8 53.5 V61 Q114.8 65.5 109.3 66.5 Q108.5 70 106.8 72.5 Q102.5 77.5 97.2 80 V90 Q101 92.5 111 94.5 Q124 97.5 128.5 106 Q130.5 112 130.5 123 H39.5 Q39.5 112 41.5 106 Q46 97.5 59 94.5 Q69 92.5 73.8 90 V80 Q68.5 77.5 64.2 72.5 Q62.5 70 61.7 66.5 Q56.2 65.5 56.2 61 V53.5 Q56.2 50 59.5 50 Z" fill="rgba(0,0,0,0.25)"/></svg><div class="a" style="left:4px;top:98.5px;width:20px;height:20px;background:#e05553"><svg class="a" style="left:4px;top:3px" width="14" height="14" viewBox="0 0 14 14"><path d="M5 6.5 V3.5 A2 2 0 0 1 9 3.5 V6.5 A2 2 0 0 1 5 6.5 Z" stroke="#fff" stroke-width="1.1" fill="none"/><path d="M3 6.5 A4 4 0 0 0 11 6.5 M7 10.5 V12.5" stroke="#fff" stroke-width="1.1" fill="none"/><path d="M2 2 L12 12" stroke="#fff" stroke-width="1.2"/></svg></div><div class="a lbl" style="left:24px;top:98.5px;width:123px">Татьяна Владимир...</div></div>
<div class="a tile" style="left:342px;top:373px;width:169px;height:122px;background:#6b5a46"><svg class="a" style="left:0;top:0" width="170" height="123" viewBox="0 0 170 123"><path d="M60.3 50 V36 Q60.5 28 64 25.5 Q70 21 78 20 L79 18.3 Q84 17.8 89.5 18 Q99 19 104 23 Q109.6 28 109.5 36 V50 H111.5 Q114.8 50 114.8 53.5 V61 Q114.8 65.5 109.3 66.5 Q108.5 70 106.8 72.5 Q102.5 77.5 97.2 80 V90 Q101 92.5 111 94.5 Q124 97.5 128.5 106 Q130.5 112 130.5 123 H39.5 Q39.5 112 41.5 106 Q46 97.5 59 94.5 Q69 92.5 73.8 90 V80 Q68.5 77.5 64.2 72.5 Q62.5 70 61.7 66.5 Q56.2 65.5 56.2 61 V53.5 Q56.2 50 59.5 50 Z" fill="rgba(0,0,0,0.25)"/></svg><div class="a" style="left:4px;top:98.5px;width:20px;height:20px;background:#e05553"><svg class="a" style="left:4px;top:3px" width="14" height="14" viewBox="0 0 14 14"><path d="M5 6.5 V3.5 A2 2 0 0 1 9 3.5 V6.5 A2 2 0 0 1 5 6.5 Z" stroke="#fff" stroke-width="1.1" fill="none"/><path d="M3 6.5 A4 4 0 0 0 11 6.5 M7 10.5 V12.5" stroke="#fff" stroke-width="1.1" fill="none"/><path d="M2 2 L12 12" stroke="#fff" stroke-width="1.2"/></svg></div><div class="a lbl" style="left:24px;top:98.5px;width:110.5px">Алина Жумартова</div></div>
</div>
<div id="ctl" class="a">
  <svg class="a" style="left:25px;top:14px" width="25" height="25" viewBox="0 0 25 25"><path d="M11.7 2.5 L17 10.5 H6.4 Z" stroke="#8dbfec" stroke-width="1.5" fill="none" stroke-linejoin="round"/><rect x="2.8" y="15" width="7" height="7.2" rx="0.8" stroke="#8dbfec" stroke-width="1.5" fill="none"/><circle cx="17.8" cy="18.6" r="3.9" stroke="#8dbfec" stroke-width="1.5" fill="none"/></svg>
  <svg class="a" style="left:70px;top:14px" width="28" height="24" viewBox="0 0 28 24"><circle cx="9.4" cy="7" r="4.3" stroke="#8dbfec" stroke-width="1.5" fill="none"/><path d="M2.2 21.5 Q2.2 13.8 9.4 13.8 Q16.6 13.8 16.6 21.5" stroke="#8dbfec" stroke-width="1.5" fill="none" stroke-linecap="round"/><circle cx="19.8" cy="7.8" r="3.1" stroke="#8dbfec" stroke-width="1.5" fill="none"/><path d="M17.5 14.4 Q25.5 13.5 25.5 21.5" stroke="#8dbfec" stroke-width="1.5" fill="none" stroke-linecap="round"/></svg>
  <div class="a t" style="left:101.5px;top:17.5px;font-size:18px;color:#8dbfec;letter-spacing:-0.3px;line-height:1">12</div>
  <svg class="a" style="left:141px;top:10px" width="28" height="28" viewBox="0 0 28 28"><path d="M15 7.5 H6 Q2.7 7.5 2.7 10.8 V19.5 Q2.7 22.8 6 22.8 H6.8 L6.8 26.3 L10.5 22.8 H20.5 Q23.8 22.8 23.8 19.5 V14" stroke="#8dbfec" stroke-width="1.5" fill="none" stroke-linejoin="round"/></svg>
  <div class="a t" style="left:157.5px;top:11.5px;font-size:10.5px;color:#d8645a;line-height:1">1</div>
  <svg class="a" style="left:488px;top:13px" width="25" height="26" viewBox="0 0 25 26"><path d="M7.5 14 V5.3 Q7.5 3.6 9.1 3.6 Q10.7 3.6 10.7 5.3 V12 M10.7 11 V3.3 Q10.7 1.6 12.3 1.6 Q13.9 1.6 13.9 3.3 V11 M13.9 11.5 V4.3 Q13.9 2.6 15.5 2.6 Q17.1 2.6 17.1 4.3 V12 M17.1 12 V7 Q17.1 5.3 18.7 5.3 Q20.3 5.3 20.3 7 V15.5 Q20.3 24 13.5 24 Q9.5 24 6.5 20.5 L3 16 Q2 14.5 3.2 13.6 Q4.4 12.8 5.6 14 L7.5 16" stroke="#8dbfec" stroke-width="1.5" fill="none" stroke-linecap="round" stroke-linejoin="round"/></svg>
  <div class="a" style="left:529px;top:14px;width:1px;height:22px;background:#3c3c3c"></div>
  <svg class="a" style="left:545px;top:15px" width="27" height="24" viewBox="0 0 27 24"><rect x="2.5" y="2" width="22" height="14.5" rx="2.2" stroke="#8dbfec" stroke-width="1.6" fill="none"/><path d="M11 16.5 V20.5 M16 16.5 V20.5 M7.5 21 H19.5" stroke="#8dbfec" stroke-width="1.6" stroke-linecap="round"/></svg>
  <svg class="a" style="left:593px;top:14px" width="25" height="25" viewBox="0 0 25 25"><path d="M8.2 12 V6 Q8.2 2.2 12 2.2 Q15.8 2.2 15.8 6 V11.5 M15.2 14.5 Q14 16 12 16 Q8.7 16 8.3 13" stroke="#e0605a" stroke-width="1.6" fill="none" stroke-linecap="round"/><path d="M4 11.5 Q4 19.5 12 19.5 Q15.5 19.5 17.5 17.5 M20 11.5 Q20 13 19.5 14.5 M12 19.5 V23.5" stroke="#e0605a" stroke-width="1.6" fill="none" stroke-linecap="round"/><path d="M3 2.5 L22 22" stroke="#e0605a" stroke-width="1.6" stroke-linecap="round"/></svg>
  <svg class="a" style="left:628px;top:21px" width="14" height="10" viewBox="0 0 14 10"><path d="M2.5 7.5 L7 3 L11.5 7.5" stroke="#e0605a" stroke-width="1.6" fill="none" stroke-linecap="round" stroke-linejoin="round"/></svg>
  <svg class="a" style="left:661px;top:14px" width="30" height="25" viewBox="0 0 30 25"><path d="M5.5 5.5 H4 Q2.3 5.5 2.3 7.3 V18.5 Q2.3 20.3 4 20.3 H19 M8.5 5.5 H17.5 Q19.3 5.5 19.3 7.3 V14" stroke="#e0605a" stroke-width="1.6" fill="none" stroke-linecap="round"/><path d="M19.3 11 L27.2 6.2 V19.5 L19.3 14.8" stroke="#e0605a" stroke-width="1.6" fill="none" stroke-linejoin="round"/><path d="M3 1.5 L20.5 23" stroke="#e0605a" stroke-width="1.6" stroke-linecap="round"/></svg>
  <svg class="a" style="left:710px;top:15px" width="24" height="24" viewBox="0 0 24 24"><circle cx="11.8" cy="11.2" r="9.3" stroke="#6f8db0" stroke-width="1.6" fill="none"/></svg>
  <div class="a" style="left:750px;top:14px;width:1px;height:22px;background:#3c3c3c"></div>
  <svg class="a" style="left:766px;top:14px" width="26" height="25" viewBox="0 0 26 25"><path d="M6.5 4 Q3.5 6 3.2 10 Q3.5 15 8 19 Q12 22.5 16.5 22.5 Q20 22 22 19 Q22.5 17.8 21.5 17 L18.5 14.8 Q17.5 14.2 16.6 15 L15 16.5 Q12.5 15.5 10.5 13 Q8.5 10.5 8 9 L9.5 7.5 Q10.3 6.6 9.7 5.6 L8 3 Q7.3 2.5 6.5 4 Z" stroke="#e0605a" stroke-width="1.6" fill="none" stroke-linejoin="round" transform="translate(25 0) scale(-1 1)"/></svg>
  <svg class="a" style="left:1169px;top:16px" width="30" height="18" viewBox="0 0 30 18"><rect x="2.8" y="2.5" width="11.5" height="13.5" rx="2" stroke="#8dbfec" stroke-width="1.6" fill="none"/><rect x="18.5" y="3" width="7.8" height="5" rx="1.8" stroke="#8dbfec" stroke-width="1.6" fill="none"/><rect x="18.5" y="11" width="7.8" height="5" rx="1.8" stroke="#8dbfec" stroke-width="1.6" fill="none"/></svg>
  <div class="a" style="left:1231px;top:12px;width:28px;height:28px;border-radius:50%;background:#2a2a2a"></div>
  <div class="a t" style="left:1240px;top:17px;font-size:17px;color:#9a9a9a;line-height:1">?</div>
</div>
<div id="task" class="a">
  <svg class="a" style="left:8px;top:6px" width="14" height="14" viewBox="0 0 14 14"><path d="M0 2 L6 1.2 V6.6 H0 Z M7 1 L14 0 V6.6 H7 Z M0 7.4 H6 V12.8 L0 12 Z M7 7.4 H14 V14 L7 13 Z" fill="#fff"/></svg>
  <div class="a" style="left:30px;top:0.5px;width:215px;height:25.5px;background:#f0f0f0;overflow:hidden">
    <svg class="a" style="left:10px;top:5px" width="16" height="16" viewBox="0 0 16 16"><circle cx="9.5" cy="6.5" r="4.2" stroke="#222" stroke-width="1.3" fill="none"/><path d="M6.5 9.5 L1.5 14.5" stroke="#222" stroke-width="1.4"/></svg>
    <div class="a t" style="left:33px;top:5px;font-size:13px;color:#4a4a4a;line-height:1">Поиск</div>
    <svg class="a" style="left:165px;top:0" width="50" height="26" viewBox="0 0 50 26"><ellipse cx="16" cy="6" rx="6" ry="2" fill="#cfe0ea"/><ellipse cx="40" cy="5" rx="5" ry="2" fill="#d8e6ee"/><path d="M23 15 V7 H25 V5 H27 V8 H29 V6 H33 V4 H36 V7 H38 V6 H40 V5 H42 V15 Z" fill="#c99466"/><path d="M26 9 H28 V13 H26Z M33 8 H35 V13 H33Z" fill="#a86a48"/><ellipse cx="34.3" cy="26.5" rx="14.5" ry="13" fill="#4f9a4e"/><ellipse cx="32" cy="22" rx="9" ry="6" fill="#6cae5a" opacity="0.7"/><circle cx="9" cy="14" r="5" fill="#f2c4c0"/><circle cx="15" cy="11" r="4" fill="#eeb0ac"/><circle cx="7" cy="21" r="4.5" fill="#f0bcb8"/><circle cx="17" cy="19" r="4" fill="#e8a8a4"/><path d="M21 26 L16 19 L11 14 M16 19 L9 21" stroke="#7a4a3a" stroke-width="1.2" fill="none"/></svg>
  </div>
  <svg class="a" style="left:252px;top:6px" width="15" height="14" viewBox="0 0 15 14"><rect x="2.5" y="3" width="8" height="8" stroke="#ddd" stroke-width="1.2" fill="none"/><path d="M1 1 H12 M1 13 H12 M13.5 2 V5 M13.5 9 V12" stroke="#ddd" stroke-width="1.2"/></svg>
  <svg class="a" style="left:284px;top:7px" width="16" height="12" viewBox="0 0 16 12"><path d="M1 7 Q4 2 8 4 Q12 2 15 6 Q12 11 8 9 Q4 11 1 7Z" fill="#c8141e"/><path d="M3 7 Q8 6 13 6.5" stroke="#5a0a0a" stroke-width="1"/></svg>
  <svg class="a" style="left:316px;top:6px" width="15" height="14" viewBox="0 0 15 14"><path d="M0.5 2 H5.5 L7 3.5 H14.5 V13 H0.5Z" fill="#e8b43a"/><rect x="0.5" y="5.5" width="14" height="7.5" fill="#f7d46a"/><rect x="3" y="8" width="9" height="3" fill="#3a8ad8"/></svg>
  <div class="a" style="left:312px;top:24px;width:23px;height:2px;background:#8fb4d8"></div>
  <svg class="a" style="left:346px;top:6px" width="15" height="15" viewBox="0 0 15 15"><circle cx="7.5" cy="7.5" r="7" fill="#fff"/><path d="M5 3.5 L7.5 8 L10 3.5 M7.5 8 V12" stroke="#e0251b" stroke-width="1.8" fill="none"/></svg>
  <svg class="a" style="left:377px;top:6px" width="15" height="15" viewBox="0 0 15 15"><circle cx="7.5" cy="7.5" r="7" fill="#1a78c8"/><path d="M3 9 Q3 4 7.5 3.5 Q12 3.5 12.5 7.5 H6 Q6.5 10.5 10 10.8 Q12 10.8 13 10 Q11.5 13.5 7.5 13.5 Q3 13 3 9Z" fill="#5ad0a0"/></svg>
  <div class="a" style="left:401px;top:0;width:29px;height:26px;background:#3a3a3a"></div>
  <div class="a" style="left:404px;top:24px;width:23px;height:2px;background:#8fb4d8"></div>
  <svg class="a" style="left:408px;top:6px" width="15" height="15" viewBox="0 0 15 15"><circle cx="7.5" cy="7.5" r="7" fill="#db4437"/><path d="M7.5 7.5 L1.4 4 A7 7 0 0 1 13.6 4 Z" fill="#db4437"/><path d="M7.5 7.5 L13.6 4 A7 7 0 0 1 7.5 14.5 Z" fill="#f4c20d"/><path d="M7.5 7.5 L7.5 14.5 A7 7 0 0 1 1.4 4 Z" fill="#0f9d58"/><circle cx="7.5" cy="7.5" r="3.3" fill="#fff"/><circle cx="7.5" cy="7.5" r="2.5" fill="#4285f4"/></svg>
  <svg class="a" style="left:439px;top:6px" width="15" height="15" viewBox="0 0 15 15"><circle cx="7.5" cy="7.5" r="7" fill="#5865f2"/><path d="M4 10 Q3.5 6.5 5 4.5 L6.5 4.2 L7 5 H8 L8.5 4.2 L10 4.5 Q11.5 6.5 11 10 L9.5 10.8 L9 10 H6 L5.5 10.8Z" fill="#fff"/><circle cx="6.2" cy="7.8" r="0.9" fill="#5865f2"/><circle cx="8.8" cy="7.8" r="0.9" fill="#5865f2"/></svg>
  <svg class="a" style="left:470px;top:6px" width="15" height="15" viewBox="0 0 15 15"><circle cx="7.5" cy="7.5" r="7" fill="#2aa3df"/><path d="M3.5 7.3 L11 4.3 L9.8 11 L7.5 9.3 L6.3 10.5 L6.2 8.6 L9.5 5.8 L5.5 8.1Z" fill="#fff"/></svg>
  <svg class="a" style="left:500px;top:6px" width="15" height="15" viewBox="0 0 15 15"><path d="M2 13.5 L2.9 10.5 A6.3 6.3 0 1 1 5 12.4 Z" stroke="#2fc64f" stroke-width="1.4" fill="none" stroke-linejoin="round"/><path d="M5.3 5 Q5 7 7 9 Q9 10.8 10.6 10.2 L10.2 8.8 L8.9 8.5 L8.3 9 Q7 8.3 6.3 7 L6.8 6.3 L6.4 5 Z" fill="#2fc64f"/></svg>
  <svg class="a" style="left:531px;top:6px" width="15" height="15" viewBox="0 0 15 15"><path d="M10.5 0.8 L14.3 2.6 V12.4 L10.5 14.2 L4 8.6 L1.7 10.4 L0.7 9.9 V5.1 L1.7 4.6 L4 6.4 Z M10.5 4.4 L6.5 7.5 L10.5 10.6 Z M1.8 6.2 V8.8 L3.1 7.5Z" fill="#2f9be8" fill-rule="evenodd"/></svg>

  <svg class="a" style="left:984px;top:6px" width="23" height="15" viewBox="0 0 23 15"><path d="M4.5 14 Q0.5 14 0.8 10.5 Q1.2 7.5 4.5 7.5 Q5 3 9.5 2 Q14 1.5 15.8 5.5 Q21.5 5.5 22 10 Q22 14 18 14Z" fill="#c9dcf6"/><path d="M4.5 14 Q0.5 14 0.8 10.5 Q6 12 22 10 Q22 14 18 14Z" fill="#9fbde8"/></svg>
  <div class="a t" style="left:1012px;top:7px;font-size:12.5px;color:#f2f2f2;line-height:1;letter-spacing:-0.2px">11°C&nbsp; Cloudy</div>
  <svg class="a" style="left:1095px;top:8px" width="13" height="9" viewBox="0 0 13 9"><path d="M1.5 7 L6.5 2 L11.5 7" stroke="#eee" stroke-width="1.2" fill="none"/></svg>
  <svg class="a" style="left:1116px;top:6px" width="13" height="14" viewBox="0 0 13 14"><path d="M1.5 12 A10 10 0 0 1 11.5 2 M4 12 A7.5 7.5 0 0 1 11.5 4.5 M6.5 12 A5 5 0 0 1 11.5 7" stroke="#ddd" stroke-width="1" fill="none"/><circle cx="10" cy="11.3" r="1.2" fill="#eee"/></svg>
  <svg class="a" style="left:1134px;top:7px" width="16" height="12" viewBox="0 0 16 12"><rect x="2" y="3" width="12" height="7" fill="#eee"/><rect x="14" y="5" width="1.5" height="3" fill="#eee"/><path d="M1 1 L4 3" stroke="#eee" stroke-width="1"/></svg>
  <svg class="a" style="left:1154px;top:6px" width="14" height="14" viewBox="0 0 14 14"><path d="M1 5 H3.5 L7 2 V12 L3.5 9 H1Z" stroke="#eee" stroke-width="1" fill="none"/><path d="M9 5 Q10 7 9 9 M10.8 3.5 Q12.8 7 10.8 10.5" stroke="#eee" stroke-width="1" fill="none"/></svg>
  <div class="a t" style="left:1177.5px;top:8px;font-size:11px;color:#f2f2f2;line-height:1;letter-spacing:-0.4px">ENG</div>
  <div class="a t" style="left:1207px;top:8px;font-size:11px;color:#f2f2f2;line-height:1;letter-spacing:-0.5px">14:44</div>
  <svg class="a" style="left:1245px;top:6px" width="15" height="15" viewBox="0 0 15 15"><path d="M0.5 0.8 H14.5 V11.5 H10 L7.5 14.2 L5 11.5 H0.5 Z" fill="#fff"/><path d="M3 4 H12 M3 6.5 H12 M3 9 H9" stroke="#1c1c1c" stroke-width="1"/></svg>
</div>
</body></html>
